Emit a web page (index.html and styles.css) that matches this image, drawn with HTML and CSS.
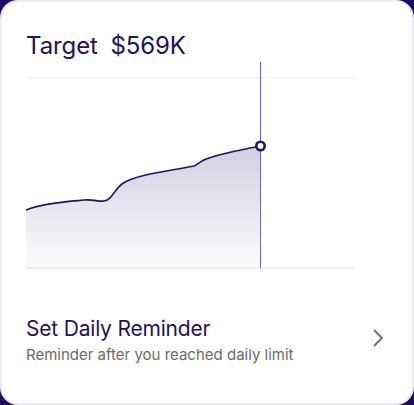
FILE: index.html
```html
<!DOCTYPE html>
<html>
<head>
<meta charset="utf-8">
<link rel="stylesheet" href="styles.css">
</head>
<body>
<div class="card">
  <h1 class="title">Target <span class="amount">$569K</span></h1>
  <svg class="chart" width="330" height="212" viewBox="0 0 330 212">
    <defs>
      <linearGradient id="fill" x1="0" y1="0" x2="0" y2="1">
        <stop offset="0" stop-color="#d3cfe0"/>
        <stop offset="1" stop-color="#d3cfe0" stop-opacity="0.08"/>
      </linearGradient>
    </defs>
    <line x1="0" y1="18" x2="328" y2="18" stroke="#efedf3" stroke-width="1"/>
    <line x1="0" y1="208" x2="328" y2="208" stroke="#efedf3" stroke-width="2"/>
    <path d="M0 150 C 20 142, 50 141, 58 140 C 68 139, 72 142, 78 141 C 86 140, 88 130, 96 124 C 110 114, 150 110, 168 106 C 172 105, 172 102, 180 99 C 195 93, 215 90, 234 86 L 234 208 L 0 208 Z" fill="url(#fill)"/>
    <path d="M0 150 C 20 142, 50 141, 58 140 C 68 139, 72 142, 78 141 C 86 140, 88 130, 96 124 C 110 114, 150 110, 168 106 C 172 105, 172 102, 180 99 C 195 93, 215 90, 234 86" fill="none" stroke="#22135a" stroke-width="1.6"/>
    <line x1="234.5" y1="2" x2="234.5" y2="208" stroke="#6d63b0" stroke-width="1"/>
    <circle cx="234.5" cy="86" r="4.2" fill="#fff" stroke="#22135a" stroke-width="2.6"/>
  </svg>
  <div class="reminder">
    <div class="texts">
      <div class="rtitle">Set Daily Reminder</div>
      <div class="rsub">Reminder after you reached daily limit</div>
    </div>
    <svg class="chev" width="12" height="20" viewBox="0 0 12 20">
      <path d="M2 2 L10 10 L2 18" fill="none" stroke="#6e6e6e" stroke-width="1.8"/>
    </svg>
  </div>
</div>
</body>
</html>
```
FILE: styles.css
```css
html, body {
  margin: 0;
  padding: 0;
  background: #1c0b5e;
}
.card {
  box-sizing: border-box;
  width: 414px;
  height: 405px;
  background: #fff;
  border: 2px solid #ecebf4;
  border-radius: 18px;
  padding: 29px 24px 0 24px;
  font-family: Inter, "Noto Sans", sans-serif;
}
.title {
  margin: 0;
  font-size: 24px;
  line-height: 29px;
  font-weight: 400;
  color: #22135a;
  letter-spacing: -0.1px;
}
.amount {
  margin-left: 6px;
}
.chart {
  display: block;
  margin-top: 0;
}
.reminder {
  display: flex;
  align-items: center;
  justify-content: space-between;
  margin-top: 44px;
  padding-right: 4px;
}
.rtitle {
  font-size: 21px;
  line-height: 26px;
  color: #22135a;
  letter-spacing: -0.2px;
}
.rsub {
  margin-top: 4px;
  font-size: 15px;
  line-height: 18px;
  color: #6b6b6b;
}
.chev {
  display: block;
  margin-top: -5px;
}
```
